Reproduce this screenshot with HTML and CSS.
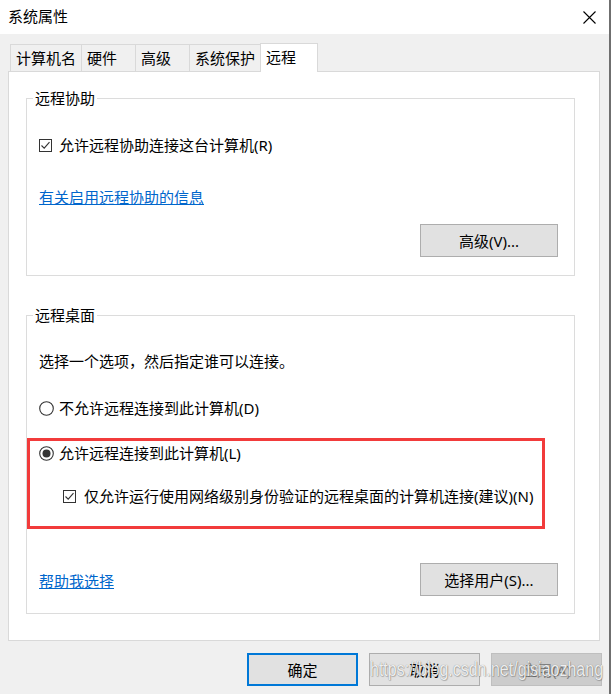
FILE: index.html
```html
<!DOCTYPE html>
<html lang="zh-CN">
<head>
<meta charset="utf-8">
<title>系统属性</title>
<link rel="stylesheet" href="styles.css">
</head>
<body>
<div class="window">
  <div class="titlebar">
    <span class="title">系统属性</span>
    <svg class="close" width="13" height="13" viewBox="0 0 13 13"><path d="M0.5 0.5 L12.5 12.5 M12.5 0.5 L0.5 12.5" stroke="#000" stroke-width="1.1" fill="none"/></svg>
  </div>
  <div class="main">
    <div class="tabs">
      <div class="tab t-wide">计算机名</div>
      <div class="tab t-narrow">硬件</div>
      <div class="tab t-narrow">高级</div>
      <div class="tab t-wide">系统保护</div>
      <div class="tab t-active">远程</div>
    </div>
    <div class="panel">
      <fieldset class="group group-assist">
        <legend class="legend">远程协助</legend>
        <div class="row">
          <svg class="check" width="13" height="13" viewBox="0 0 13 13"><rect x="0.5" y="0.5" width="12" height="12" fill="#fff" stroke="#333"/><path d="M2.5 6.5 L5.2 9.2 L10.5 3.2" fill="none" stroke="#333" stroke-width="1.1"/></svg>
          <span class="label">允许远程协助连接这台计算机(R)</span>
        </div>
        <a class="link link-info">有关启用远程协助的信息</a>
        <div class="btn-line">
          <button class="btn btn-side">高级(V)...</button>
        </div>
      </fieldset>

      <fieldset class="group group-desktop">
        <legend class="legend">远程桌面</legend>
        <div class="row text-intro">选择一个选项，然后指定谁可以连接。</div>
        <div class="row row-radio1">
          <svg class="radio" width="15" height="15" viewBox="0 0 15 15"><circle cx="7.5" cy="7.5" r="6.8" fill="#fff" stroke="#333" stroke-width="1.1"/></svg>
          <span class="label">不允许远程连接到此计算机(D)</span>
        </div>
        <div class="highlight">
          <div class="row">
            <svg class="radio" width="15" height="15" viewBox="0 0 15 15"><circle cx="7.5" cy="7.5" r="6.8" fill="#fff" stroke="#333" stroke-width="1.1"/><circle cx="7.5" cy="7.5" r="4" fill="#333"/></svg>
            <span class="label">允许远程连接到此计算机(L)</span>
          </div>
          <div class="row row-sub">
            <svg class="check" width="13" height="13" viewBox="0 0 13 13"><rect x="0.5" y="0.5" width="12" height="12" fill="#fff" stroke="#333"/><path d="M2.5 6.5 L5.2 9.2 L10.5 3.2" fill="none" stroke="#333" stroke-width="1.1"/></svg>
            <span class="label label-sub">仅允许运行使用网络级别身份验证的远程桌面的计算机连接(建议)(N)</span>
          </div>
        </div>
        <div class="split-line">
          <a class="link">帮助我选择</a>
          <button class="btn btn-side">选择用户(S)...</button>
        </div>
      </fieldset>
    </div>
    <div class="footer">
      <button class="btn btn-foot btn-default">确定</button>
      <button class="btn btn-foot">取消</button>
      <button class="btn btn-foot btn-disabled">应用(A)</button>
    </div>
  </div>
  <div class="watermark">https://blog.csdn.net/gisiaozhang</div>
</div>
</body>
</html>
```

FILE: styles.css
```css
* { box-sizing: border-box; }

html, body {
  margin: 0;
  padding: 0;
}

body {
  width: 611px;
  height: 694px;
  overflow: hidden;
  background: #f0f0f0;
  font-family: "Noto Sans", "Noto Sans CJK SC", sans-serif;
  font-size: 15px;
  line-height: 20px;
  color: #000;
}

.window {
  position: relative;
  width: 611px;
  height: 694px;
  background: #f0f0f0;
  border-right: 2px solid #6f6f6f;
}

.titlebar {
  height: 34px;
  background: #fff;
  display: flex;
  align-items: center;
  justify-content: space-between;
  padding: 0 13px 2px 8px;
}

.title {
  font-size: 15px;
  line-height: 20px;
}

.close {
  display: block;
  margin-top: 2px;
}

.main {
  padding: 9px 9px 0 8px;
}

.tabs {
  display: flex;
  align-items: flex-end;
  height: 28px;
  margin-left: 2px;
}

.tab {
  height: 27px;
  border: 1px solid #d9d9d9;
  border-bottom: none;
  background: #f0f0f0;
  padding: 3px 0 0 5px;
  white-space: nowrap;
  margin-left: -1px;
}

.tab:first-child { margin-left: 0; }

.t-wide { width: 72px; }
.t-narrow { width: 55px; }

.t-active {
  width: 58px;
  height: 29px;
  background: #fff;
  position: relative;
  z-index: 1;
  margin-bottom: -1px;
  padding-top: 3px;
}

.panel {
  background: #fff;
  border: 1px solid #d9d9d9;
  height: 570px;
  padding: 16px 24px 0 17px;
}

.group {
  margin: 0;
  border: 1px solid #dcdcdc;
  min-width: 0;
}

.legend {
  padding: 0 2px;
  margin-left: -6px;
  line-height: 20px;
}

.group-assist {
  padding: 27px 16px 18px 12px;
}

.group-desktop {
  margin-top: 29px;
  padding: 26px 16px 17px 12px;
}

.row {
  display: flex;
  align-items: center;
  height: 20px;
  white-space: nowrap;
}

.check {
  display: block;
  flex: none;
  margin-right: 7px;
}

.radio {
  display: block;
  flex: none;
  margin-right: 5px;
}

.link {
  display: block;
  margin-top: 32px;
  color: #0066cc;
  text-decoration: underline;
  width: max-content;
}

.btn-line {
  display: flex;
  justify-content: flex-end;
  margin-top: 17px;
}

.btn {
  font-family: inherit;
  font-size: 15px;
  line-height: 20px;
  color: #000;
  background: #e1e1e1;
  border: 1px solid #adadad;
  padding: 0;
  margin: 0;
}

.btn-side {
  width: 138px;
  height: 33px;
}

.row-radio1 {
  margin-top: 27px;
}

.highlight {
  margin: 20px 0 0 -12px;
  width: 518px;
  border: 3px solid #f23b3b;
  padding: 2px 0 20px 9px;
}

.row-sub {
  margin-top: 23px;
  padding-left: 24px;
}

.check + .label-sub {
  margin-left: 1px;
}

.split-line {
  display: flex;
  justify-content: space-between;
  align-items: center;
  margin-top: 34px;
}

.split-line .link {
  margin-top: 3px;
}

.footer {
  display: flex;
  justify-content: flex-end;
  gap: 11px;
  margin-top: 12px;
  margin-right: -2px;
}

.btn-foot {
  width: 111px;
  height: 33px;
}

.btn-default {
  border: 2px solid #0078d7;
}

.btn-disabled {
  background: #cccccc;
  border-color: #bfbfbf;
  color: #838383;
}

.watermark {
  position: absolute;
  left: 370px;
  top: 658px;
  font-family: "Liberation Sans", sans-serif;
  font-size: 20px;
  line-height: 22px;
  white-space: nowrap;
  color: rgba(255, 255, 255, 0.88);
  text-shadow: 0 0 1px rgba(0, 0, 0, 0.45), 1px 1px 1px rgba(0, 0, 0, 0.2);
  transform: scaleX(0.8);
  transform-origin: left center;
  pointer-events: none;
}
```
